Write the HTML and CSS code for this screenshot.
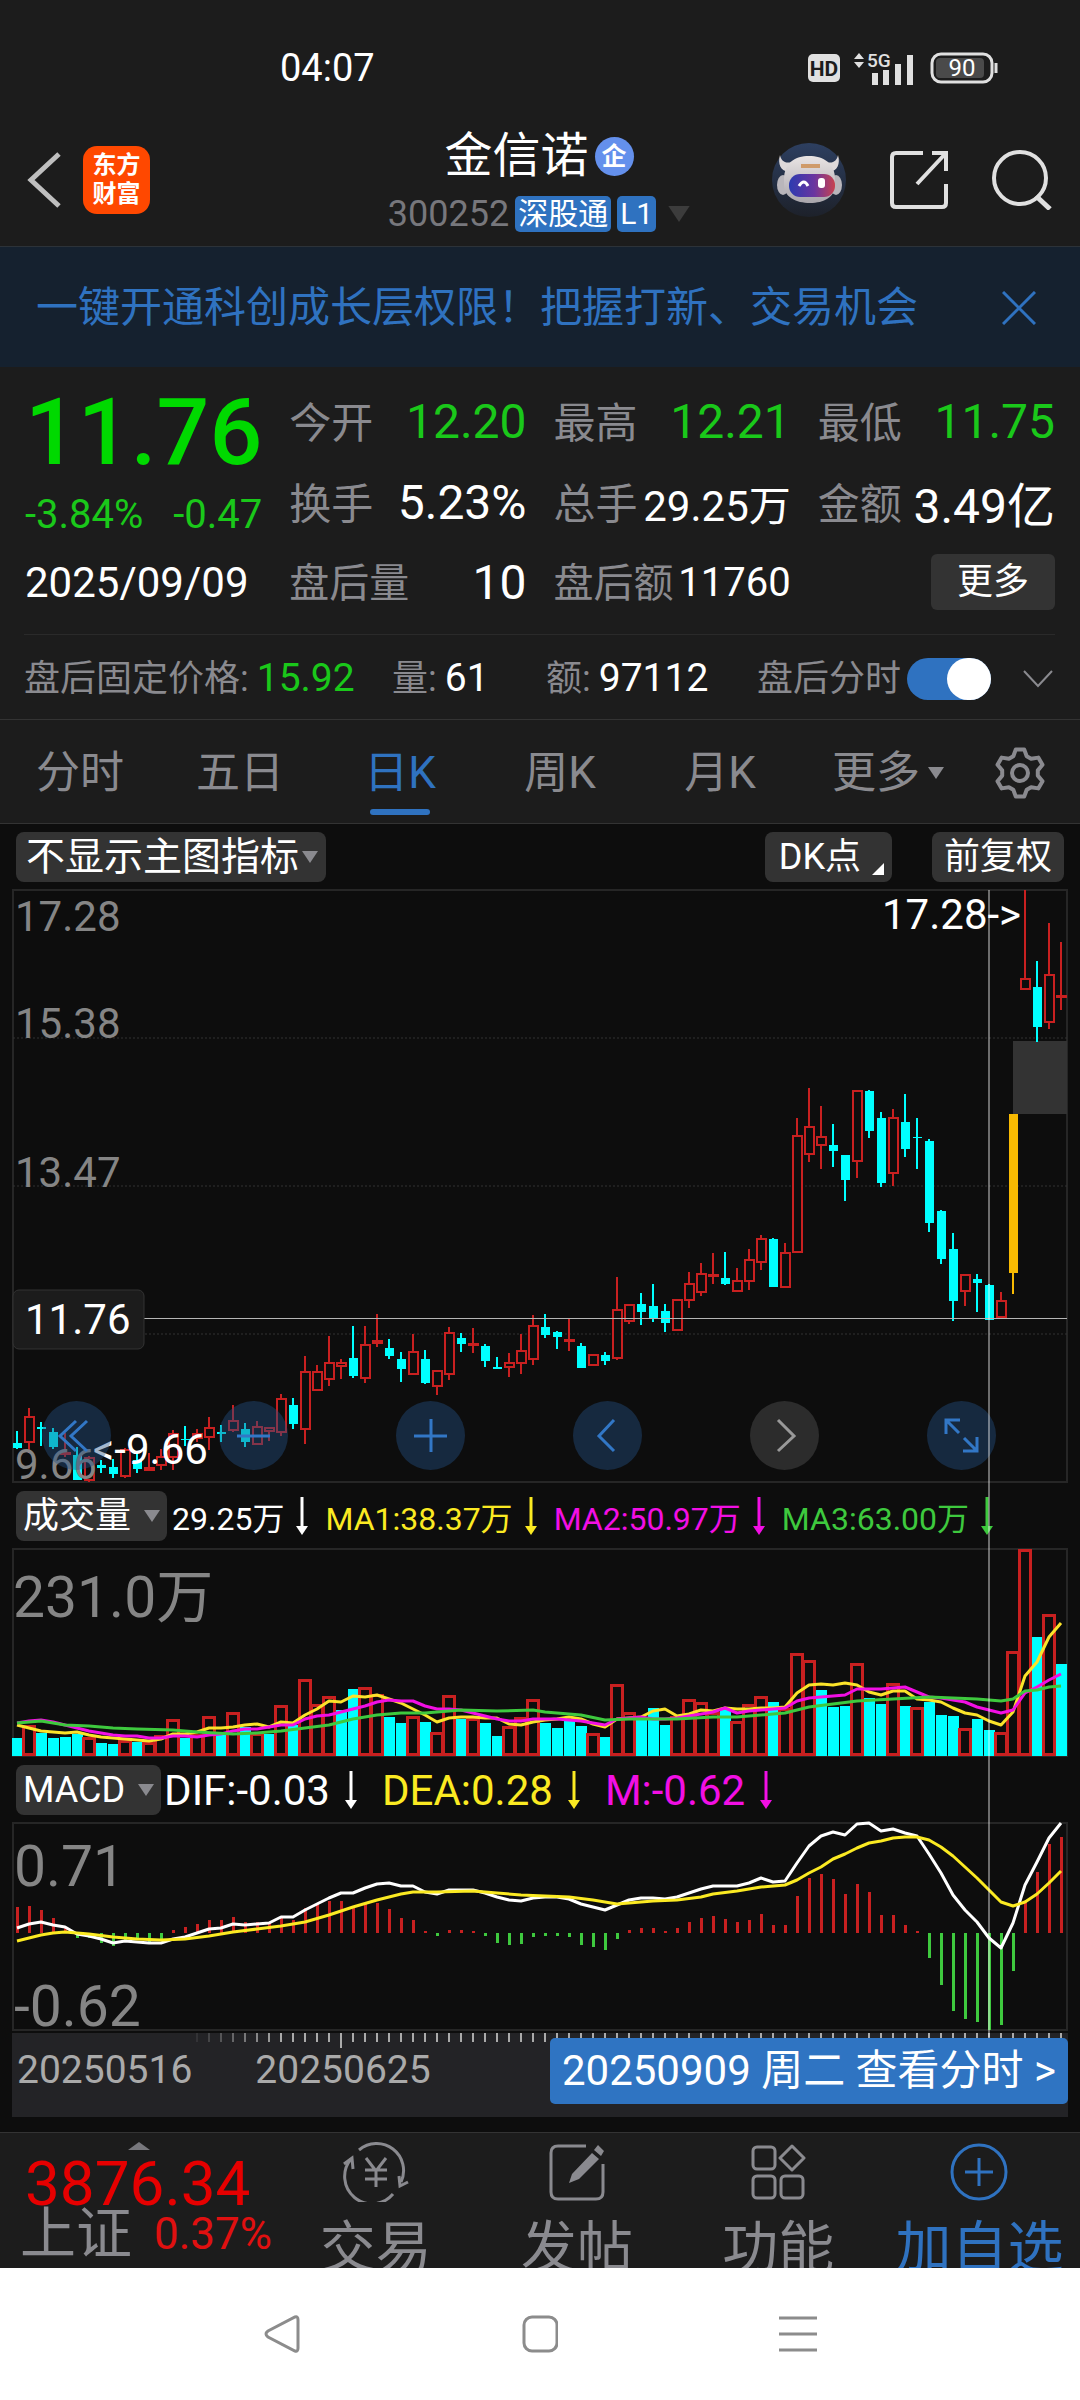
FILE: index.html
```html
<!DOCTYPE html>
<html lang="zh-CN">
<head>
<meta charset="utf-8">
<meta name="viewport" content="width=device-width, initial-scale=1">
<title>金信诺 300252</title>
<link rel="stylesheet" href="styles.css">
</head>
<body>
<svg class="defs" aria-hidden="true">
  <symbol id="i-down" viewBox="0 0 12 38"><path d="M6 0V31" stroke="currentColor" stroke-width="3"/><path d="M0 29H12L6 38Z" fill="currentColor"/></symbol>
  <symbol id="i-tri" viewBox="0 0 16 12"><path d="M0 0H16L8 12Z" fill="currentColor"/></symbol>
</svg>

<div class="status">
  <span class="clock">04:07</span>
  <span class="status-icons">
    <svg width="32" height="32" viewBox="0 0 32 32"><rect y="2" width="32" height="28" rx="5" fill="#e0e0e0"/><text x="16" y="24" text-anchor="middle" font-size="21" font-weight="700" fill="#1c1c1c">HD</text></svg>
    <svg width="62" height="40" viewBox="0 -4 62 40"><path d="M0 7L5 1L10 7ZM0 10H10L5 16Z" fill="#e0e0e0"/><text x="13" y="15" font-size="19" font-weight="500" fill="#e0e0e0">5G</text><path d="M21 21V33M32 18V33M44 12V33M56 3V33" stroke="#e0e0e0" stroke-width="6"/></svg>
    <svg width="68" height="32" viewBox="0 0 68 32"><rect x="2" y="2" width="60" height="28" rx="9" fill="none" stroke="#e0e0e0" stroke-width="3"/><rect x="6" y="6" width="48" height="20" rx="4" fill="#4a4a4a"/><path d="M66 11V21" stroke="#e0e0e0" stroke-width="3"/><text x="32" y="24" text-anchor="middle" font-size="24" fill="#fff">90</text></svg>
  </span>
</div>

<header class="top">
  <div class="top-left">
    <button class="icon-btn" aria-label="返回"><svg width="36" height="58" viewBox="0 0 36 58"><path d="M33 3L5 29L33 55" fill="none" stroke="#bfbfbf" stroke-width="5"/></svg></button>
    <a class="logo" href="#">东方<br>财富</a>
  </div>
  <div class="title">
    <h1>金信诺<span class="corp">企</span></h1>
    <div class="code"><span>300252</span><span class="tag">深股通</span><span class="tag">L1</span><svg class="code-tri" width="22" height="16"><use href="#i-tri"/></svg></div>
  </div>
  <div class="top-right">
    <button class="icon-btn" aria-label="助手">
      <svg width="74" height="74" viewBox="0 0 74 74">
        <defs>
          <linearGradient id="g-bg" x2="0" y2="1"><stop offset="0" stop-color="#2d3f60"/><stop offset="1" stop-color="#1d212a"/></linearGradient>
          <linearGradient id="g-head" x2="0" y2="1"><stop offset="0" stop-color="#e9e4e4"/><stop offset="1" stop-color="#a9a6ac"/></linearGradient>
          <linearGradient id="g-visor"><stop offset="0" stop-color="#2c3bb0"/><stop offset=".55" stop-color="#6a35a0"/><stop offset="1" stop-color="#c8434f"/></linearGradient>
        </defs>
        <circle cx="37" cy="37" r="37" fill="url(#g-bg)"/>
        <path d="M8 12C5 22 10 30 18 28L22 18C14 22 9 18 8 12ZM66 12C69 22 64 30 56 28L52 18C60 22 65 18 66 12Z" fill="#ded9da"/>
        <ellipse cx="11" cy="42" rx="6" ry="10" fill="#b9b6bb"/><ellipse cx="64" cy="42" rx="6" ry="10" fill="#b9b6bb"/>
        <path d="M12 36C12 20 23 13 37 13S63 20 63 36V42C63 54 52 60 38 60S12 54 12 42Z" fill="url(#g-head)"/>
        <path d="M29 23H48" stroke="#cf9b6a" stroke-width="4"/>
        <rect x="17" y="31" width="46" height="23" rx="11" fill="url(#g-visor)"/>
        <path d="M27 43Q32 35 36 43" fill="none" stroke="#fff" stroke-width="3"/><rect x="46" y="35" width="7" height="10" rx="3" fill="#fff"/>
      </svg>
    </button>
    <button class="icon-btn" aria-label="分享"><svg width="60" height="60" viewBox="0 0 60 60"><path d="M34 3H7Q3 3 3 7V53Q3 57 7 57H53Q57 57 57 53V34M43 3H57V21M57 3L28 34" fill="none" stroke="#e0e0e0" stroke-width="4"/></svg></button>
    <button class="icon-btn" aria-label="搜索"><svg width="60" height="60" viewBox="0 0 60 60"><circle cx="28" cy="28" r="26" fill="none" stroke="#e0e0e0" stroke-width="4"/><path d="M44 46L58 59" stroke="#e0e0e0" stroke-width="5"/></svg></button>
  </div>
</header>

<div class="notice">
  <a href="#">一键开通科创成长层权限！把握打新、交易机会</a>
  <button class="icon-btn" aria-label="关闭"><svg width="34" height="34" viewBox="0 0 34 34"><path d="M1 1L33 33M33 1L1 33" stroke="#2f72c0" stroke-width="3"/></svg></button>
</div>

<section class="quote">
  <div class="quote-grid">
    <div class="last">
      <strong>11.76</strong>
      <div class="change"><span>-3.84%</span><span>-0.47</span></div>
    </div>
    <div class="cell"><span>今开</span><b class="down">12.20</b></div>
    <div class="cell"><span>最高</span><b class="down">12.21</b></div>
    <div class="cell"><span>最低</span><b class="down">11.75</b></div>
    <div class="cell"><span>换手</span><b>5.23%</b></div>
    <div class="cell"><span>总手</span><b class="mid">29.25万</b></div>
    <div class="cell"><span>金额</span><b>3.49亿</b></div>
    <div class="cell date">2025/09/09</div>
    <div class="cell after"><span>盘后量</span><b>10</b></div>
    <div class="cell after"><span>盘后额</span><b class="small">11760</b></div>
    <div class="cell end"><button class="more">更多</button></div>
  </div>
  <div class="fixed-price">
    <div>盘后固定价格:<b class="down">15.92</b></div>
    <div>量:<b>61</b></div>
    <div>额:<b>97112</b></div>
    <label class="switch">盘后分时<input type="checkbox" role="switch" checked></label>
    <button class="icon-btn" aria-label="展开"><svg width="30" height="20" viewBox="0 0 30 20"><path d="M1 2L15 17L29 2" fill="none" stroke="#8a8a8f" stroke-width="2"/></svg></button>
  </div>
</section>

<nav class="tabs">
  <button>分时</button>
  <button>五日</button>
  <button class="active">日K</button>
  <button>周K</button>
  <button>月K</button>
  <button class="other">更多<svg width="16" height="12"><use href="#i-tri"/></svg></button>
  <button class="gear" aria-label="设置"><svg width="52" height="52" viewBox="-26 -26 52 52"><g fill="none" stroke="#8a8a8f" stroke-width="4" stroke-linejoin="round"><path d="M-6.7-16.7L-4.2-23.6H4.2L6.7-16.7L11.1-14.2L18.3-15.4L22.5-8.2L17.8-2.6V2.6L22.5 8.2L18.3 15.4L11.1 14.2L6.7 16.7L4.2 23.6H-4.2L-6.7 16.7L-11.1 14.2L-18.3 15.4L-22.5 8.2L-17.8 2.6V-2.6L-22.5-8.2L-18.3-15.4L-11.1-14.2Z"/><circle r="8"/></g></svg></button>
</nav>

<main class="board">
  <div class="bar">
    <button class="chip wide">不显示主图指标<svg width="16" height="12"><use href="#i-tri"/></svg></button>
    <button class="chip dk">DK点<i></i></button>
    <button class="chip">前复权</button>
  </div>

  <div class="charts">
    <div class="pane">
      <svg class="plot" id="price" viewBox="0 0 1080 592" role="img" aria-label="日K线"></svg>
      <div class="tools">
        <button aria-label="最早"><svg viewBox="0 0 69 69"><path d="M34 20L18 35L34 50M45 20L29 35L45 50"/></svg></button>
        <button aria-label="缩小"><svg viewBox="0 0 69 69"><path d="M18 35H51"/></svg></button>
        <button aria-label="放大"><svg viewBox="0 0 69 69"><path d="M18 35H51M35 18V51"/></svg></button>
        <button aria-label="向左"><svg viewBox="0 0 69 69"><path d="M41 19L26 35L41 50"/></svg></button>
        <button class="off" aria-label="向右"><svg viewBox="0 0 69 69"><path d="M28 19L44 35L28 50"/></svg></button>
        <button aria-label="全屏"><svg viewBox="0 0 69 69"><path d="M19 33V19H33M19 19L32 32M50 36V50H36M50 50L37 37"/></svg></button>
      </div>
    </div>

    <div class="bar legend vol">
      <button class="chip">成交量<svg width="16" height="12"><use href="#i-tri"/></svg></button>
      <span>29.25万<svg><use href="#i-down"/></svg></span>
      <span class="yellow">MA1:38.37万<svg><use href="#i-down"/></svg></span>
      <span class="magenta">MA2:50.97万<svg><use href="#i-down"/></svg></span>
      <span class="green">MA3:63.00万<svg><use href="#i-down"/></svg></span>
    </div>
    <svg class="plot" id="volume" viewBox="0 0 1080 208" role="img" aria-label="成交量"></svg>

    <div class="bar legend macd">
      <button class="chip">MACD<svg width="16" height="12"><use href="#i-tri"/></svg></button>
      <span>DIF:-0.03<svg><use href="#i-down"/></svg></span>
      <span class="yellow">DEA:0.28<svg><use href="#i-down"/></svg></span>
      <span class="magenta">M:-0.62<svg><use href="#i-down"/></svg></span>
    </div>
    <svg class="plot" id="macd" viewBox="0 0 1080 208" role="img" aria-label="MACD"></svg>

    <div class="timeline">
      <svg class="plot" id="ticks" viewBox="12 0 1056 16"></svg>
      <div class="dates"><span>20250516</span><span>20250625</span></div>
      <button class="day">20250909 周二 查看分时 &gt;</button>
    </div>
    <div class="cross"></div>
  </div>
</main>

<footer class="dock">
  <a class="index" href="#">
    <svg width="22" height="8" viewBox="0 0 22 8"><path d="M0 8L11 0L22 8Z" fill="#77777c"/></svg>
    <strong>3876.34</strong>
    <span>上证<em>0.37%</em></span>
  </a>
  <a href="#"><svg width="66" height="60" viewBox="0 0 66 60" fill="none" stroke="currentColor" stroke-width="3"><path d="M16 8A27 27 0 0 1 58 40M50 52A27 27 0 0 1 8 17"/><path d="M1 22L9 16L10 27M56 34L57 44L65 40"/><path d="M23 16L33 29L43 16M33 29V45M22 28H44M22 37H44"/></svg>交易</a>
  <a href="#"><svg width="58" height="60" viewBox="0 0 58 60" fill="none" stroke="currentColor" stroke-width="3"><path d="M38 4H10Q3 4 3 11V50Q3 57 10 57H48Q55 57 55 50V22"/><path d="M50 3L56 9L53 14L46 8ZM44 11L51 17L31 37L21 41L24 32Z" fill="currentColor" stroke="none"/></svg>发帖</a>
  <a href="#"><svg width="56" height="60" viewBox="0 0 56 60" fill="none" stroke="currentColor" stroke-width="3"><rect x="3" y="5" width="22" height="22" rx="4"/><rect x="3" y="34" width="22" height="22" rx="4"/><rect x="31" y="34" width="22" height="22" rx="4"/><path d="M42 4L54 16L42 28L30 16Z" stroke-linejoin="round"/></svg>功能</a>
  <a class="add" href="#"><svg width="60" height="60" viewBox="0 0 60 60" fill="none" stroke="currentColor" stroke-width="3"><circle cx="30" cy="30" r="27"/><path d="M16 30H44M30 16V44"/></svg>加自选</a>
</footer>

<nav class="sysnav">
  <button aria-label="返回"><svg width="36" height="38" viewBox="0 0 36 38"><path d="M31 2Q34 1 34 5V33Q34 37 31 36L4 22Q0 19 4 16Z"/></svg></button>
  <button aria-label="主页"><svg width="36" height="38" viewBox="0 0 36 38"><rect x="2" y="2" width="33" height="34" rx="8"/></svg></button>
  <button aria-label="任务"><svg width="38" height="38" viewBox="0 0 38 38"><path d="M0 3H38M0 19H38M0 35H38"/></svg></button>
</nav>
<script src="chart.js"></script>
</body>
</html>
```
FILE: styles.css
```css
* { box-sizing: border-box; }
body {
  margin: 0;
  min-height: 100vh;
  display: flex;
  flex-direction: column;
  background: #fff;
  color: #fff;
  font-family: Roboto, "Noto Sans CJK SC", sans-serif;
}
button {
  margin: 0;
  padding: 0;
  border: 0;
  background: none;
  color: inherit;
  font: inherit;
  white-space: nowrap;
}
a { color: inherit; text-decoration: none; }
svg { display: block; flex: none; }
b, em { font-weight: 400; font-style: normal; }
.defs { display: none; }
.icon-btn { display: flex; }

/* status bar */
.status {
  display: flex;
  align-items: center;
  justify-content: space-between;
  padding: 48px 82px 0 280px;
  background: #1c1c1c;
  font-size: 38px;
  line-height: 40px;
}
.status-icons { display: flex; align-items: center; gap: 14px; }

/* title bar */
.top {
  display: grid;
  grid-template-columns: 1fr auto 1fr;
  align-items: center;
  padding: 40px 28px 14px 26px;
  background: #1c1c1c;
  border-bottom: 1px solid #2c3238;
}
.top-left, .top-right { display: flex; align-items: center; }
.top-left { gap: 21px; }
.top-right { justify-content: flex-end; gap: 43px; }
.logo {
  width: 67px;
  padding: 5px 0 5px;
  border-radius: 14px;
  background: #ff4800;
  font-size: 24px;
  font-weight: 700;
  line-height: 29px;
  text-align: center;
}
.title { display: flex; flex-direction: column; align-items: center; gap: 12px; }
.title h1 {
  display: flex;
  align-items: center;
  gap: 6px;
  margin: 0;
  font-size: 48px;
  font-weight: 400;
  line-height: 56px;
}
.corp {
  width: 39px;
  border-radius: 50%;
  background: #6490ec;
  font-size: 25px;
  font-weight: 700;
  line-height: 39px;
  text-align: center;
}
.code {
  display: flex;
  align-items: center;
  gap: 6px;
  color: #77777c;
  font-size: 36px;
  line-height: 36px;
}
.tag {
  padding: 0 3px;
  border-radius: 5px;
  background: #2f72c0;
  color: #fff;
  font-size: 30px;
}
.code-tri { margin-left: 6px; color: #3c3c3c; }

/* notice */
.notice {
  display: flex;
  align-items: center;
  justify-content: space-between;
  padding: 33px 44px 31px 36px;
  background: #15212f;
  color: #2f72c0;
  font-size: 42px;
  line-height: 56px;
}

/* quote */
.quote { background: #1c1c1c; border-bottom: 1px solid #333; }
.quote-grid {
  display: grid;
  grid-template-columns: repeat(4, minmax(0, 1fr));
  grid-template-rows: 82px 80px 80px;
  column-gap: 27px;
  padding: 13px 25px 12px;
}
.last { grid-row: span 2; padding-top: 3px; color: #00d900; }
.last strong { display: block; font-size: 93px; font-weight: 500; line-height: 100px; }
.change {
  display: flex;
  justify-content: space-between;
  margin-top: 8px;
  font-size: 40px;
  line-height: 48px;
}
.down, .change { color: #1ac81a; }
.cell {
  display: flex;
  align-items: center;
  justify-content: space-between;
  white-space: nowrap;
}
.cell span { padding-bottom: 4px; color: #8a8a8f; font-size: 42px; }
.cell b { font-size: 48px; }
.cell .mid { font-size: 42px; }
.cell .small { font-size: 40px; }
.cell.after span { font-size: 40px; }
.date { font-size: 42px; }
.end { justify-content: flex-end; }
.more {
  width: 124px;
  border-radius: 6px;
  background: #333;
  font-size: 36px;
  line-height: 56px;
}
.fixed-price {
  display: grid;
  grid-template-columns: 368fr 154fr 211fr 266fr 32fr;
  align-items: center;
  margin: 0 25px 0 24px;
  padding: 19px 0 16px;
  border-top: 1px solid #2a2a2a;
  color: #8a8a8f;
  font-size: 36px;
  line-height: 48px;
  white-space: nowrap;
}
.fixed-price b { margin-left: 8px; color: #fff; font-size: 39px; }
.fixed-price .down { color: #1ac81a; }
.switch { display: flex; align-items: center; gap: 6px; }
.switch input {
  appearance: none;
  display: flex;
  justify-content: flex-end;
  width: 84px;
  height: 42px;
  margin: 0;
  border-radius: 21px;
  background: #2f72c0;
}
.switch input::before { content: ""; width: 44px; border-radius: 21px; background: #fff; }

/* period tabs */
.tabs {
  display: grid;
  grid-template-columns: repeat(6, 4fr) 3fr;
  background: #1c1c1c;
  border-bottom: 1px solid #333;
  color: #8a8a8f;
  font-size: 44px;
  line-height: 52px;
}
.tabs button {
  display: flex;
  align-items: center;
  justify-content: center;
  gap: 6px;
  padding: 27px 0 24px;
}
.tabs .active {
  flex-direction: column;
  padding-bottom: 8px;
  gap: 10px;
  color: #2f72c0;
}
.tabs .other { padding-left: 16px; gap: 8px; }
.tabs .active::after { content: ""; width: 60px; height: 6px; border-radius: 3px; background: #2f72c0; }

/* chart board */
.board { padding-bottom: 15px; background: #0d0d0d; }
.bar { display: flex; align-items: center; padding: 8px 16px; }
.chip {
  display: flex;
  align-items: center;
  padding: 0 12px;
  border-radius: 8px;
  background: #333;
  font-size: 36px;
  line-height: 50px;
}
.chip svg { color: #8a8a8f; }
.wide { gap: 3px; margin-right: auto; padding: 0 8px 0 10px; font-size: 39px; }
.dk { gap: 11px; margin-right: 40px; padding: 0 8px 0 14px; }
.dk i { align-self: flex-end; margin-bottom: 7px; border: 6px solid; border-color: transparent #fff #fff transparent; }
.charts, .pane { position: relative; }
.plot { width: 100%; height: auto; overflow: visible; }
.plot text { font-size: 42px; fill: #fff; }
.plot .axis { fill: #858585; }
.plot .big { font-size: 57px; fill: #858585; }
.tools {
  position: absolute;
  right: 7.8%;
  bottom: 12px;
  left: 3.9%;
  display: flex;
  justify-content: space-between;
}
.tools button { width: 69px; height: 69px; border-radius: 50%; background: rgba(36, 81, 134, .42); }
.tools svg { fill: none; stroke: #3277c6; stroke-width: 3; }
.tools .off { background: #2c2c2c; }
.tools .off svg { stroke: #999; }

.legend span { display: flex; align-items: center; white-space: nowrap; }
.legend span svg { width: 12px; height: 38px; }
.legend .chip { padding: 0 7px; gap: 13px; }
.vol { padding-top: 9px; font-size: 32px; }
.vol span { gap: 12px; margin-right: 17px; }
.vol .chip { margin-right: 5px; }
.macd { font-size: 42px; }
.macd span { gap: 15px; margin-right: 25px; }
.macd .chip { margin-right: 3px; }
.yellow { color: #fbea22; }
.magenta { color: #f20fe4; }
.green { color: #3ec93e; }

.timeline { position: relative; margin: 2px 12px 0; padding-bottom: 26px; background: #232326; }
.dates {
  display: flex;
  gap: 63px;
  padding-left: 5px;
  color: #aaa;
  font-size: 39px;
  line-height: 42px;
}
.day {
  position: absolute;
  z-index: 2;
  top: 5px;
  right: 0;
  padding: 0 12px;
  border-radius: 5px;
  background: #2f74c2;
  font-size: 42px;
  line-height: 66px;
}
.cross {
  position: absolute;
  top: 0;
  bottom: 80px;
  left: 91.5%;
  width: 2px;
  background: rgba(255, 255, 255, .4);
}

/* bottom dock, its captions run under the system bar */
.dock {
  display: grid;
  grid-template-columns: 275fr repeat(4, 201fr);
  height: 136px;
  overflow: hidden;
  background: #1c1c1c;
  border-top: 1px solid #333;
  color: #8a8a8f;
  font-size: 56px;
  line-height: 64px;
}
.dock a {
  display: flex;
  flex-direction: column;
  align-items: center;
  gap: 14px;
  padding-top: 9px;
  white-space: nowrap;
}
.dock .add { color: #2f72c0; }
.dock .index { align-items: flex-start; gap: 0; padding-left: 20px; }
.index svg { margin-left: 108px; }
.index strong { margin-left: 5px; color: #e60000; font-size: 62px; font-weight: 400; line-height: 68px; }
.index span { display: flex; align-items: center; gap: 22px; line-height: 32px; }
.index em { color: #e01010; font-size: 44px; }

.sysnav {
  flex: 1;
  display: grid;
  grid-template-columns: repeat(3, 258px);
  justify-content: center;
  min-height: 132px;
}
.sysnav button { display: flex; align-items: center; justify-content: center; }
.sysnav svg { fill: none; stroke: #8c8c8c; stroke-width: 3; }
```
FILE: chart.js
```js
// Each candle: colour, high, body top, body bottom, low (pixels below the top of the pane).
const candles = `c 541 553 558 559;r 518 526 553 563;c 532 537 539 556;c 538 542 557 559;r 543 562 564 567;c 557 565 590 590;r 566 567 591 592;c 570 575 578 583;c 569 577 584 588;r 558 559 587 588;c 563 570 579 583;r 563 577 581 581;r 559 566 576 580;r 540 543 568 580;c 536 549 550 556;r 539 543 549 552;r 527 537 548 560;c 535 542 544 552;r 515 530 541 542;c 533 539 552 557;r 531 536 555 555;r 537 537 542 551;r 504 508 543 546;c 508 515 534 539;r 466 481 540 554;r 475 481 501 501;r 446 472 490 496;r 469 472 477 489;c 436 468 486 488;r 436 454 489 493;r 424 450 454 457;c 449 458 466 469;c 462 469 479 492;r 444 461 485 485;c 460 469 493 494;r 480 480 497 505;r 437 442 485 490;c 443 448 454 462;r 438 453 455 463;c 454 456 471 477;c 467 477 479 479;r 463 472 478 487;r 444 460 474 484;r 425 435 470 475;c 424 437 445 448;c 441 442 447 459;r 429 449 451 461;c 453 456 478 478;r 464 464 476 476;c 462 465 471 475;r 387 419 469 470;r 414 414 432 434;c 403 414 422 435;c 394 416 428 432;c 414 421 433 442;r 409 409 441 441;r 382 393 411 418;r 373 383 403 406;r 363 384 386 394;c 362 388 394 395;r 378 390 402 402;r 359 369 392 400;r 345 348 373 380;c 348 349 397 397;r 353 362 398 398;r 228 245 363 363;r 198 236 265 272;r 216 246 256 279;c 234 255 261 277;c 265 265 290 311;r 200 200 272 288;c 200 201 241 248;c 222 228 293 297;r 219 227 284 296;c 204 232 259 267;c 228 247 248 279;c 249 251 333 342;c 320 321 369 374;c 343 359 411 431;r 384 384 402 416;c 384 389 393 422;c 394 395 430 430;r 402 410 428 428;y 224 224 383 404;r 0 88 100 100;c 71 97 137 152;r 33 84 133 139;r 52 105 108 120`.split(';').map(s => s.split(' '));

// Volume bars: colour and height.
const volumes = 'c18 r31 c23 c18 c19 c22 r19 c13 c12 r16 c14 r14 r21 r37 c18 r22 r40 c22 r44 c29 r23 c22 r51 c31 r77 r52 r60 c46 c67 r69 r62 c39 c33 r40 c34 r24 r61 c37 r38 c33 c20 r30 r39 r57 c33 c28 c35 c30 r23 c19 r72 r44 c37 c48 c31 r40 r57 r54 r44 c46 r35 r52 r60 c54 r48 r103 r96 c66 c49 c50 r93 c58 c52 r73 c50 r49 c54 c41 c40 r28 c37 c26 r24 r105 r207 c119 r142 c92'.split(' ');
const ma1 = '176 179 182 183 184 183 186 188 189 190 191 192 190 185 185 183 179 179 178 176 175 178 173 174 166 160 152 153 147 148 146 150 154 160 166 173 169 168 168 169 169 175 176 173 171 170 168 170 175 178 170 169 168 162 160 167 165 161 162 159 160 160 159 159 158 144 136 135 136 134 136 143 146 142 142 150 151 153 159 164 166 172 176 163 127 113 88 74';
const ma2 = '174 172 171 173 176 179 182 184 186 187 187 189 189 187 187 188 186 185 182 180 180 178 176 176 170 167 166 163 160 157 153 151 152 152 157 160 160 161 164 167 170 172 172 170 170 170 171 172 174 176 170 169 168 170 170 169 167 165 163 159 164 162 161 160 159 152 149 148 147 146 140 140 140 139 138 143 148 149 151 153 158 161 164 161 144 138 131 125';
const ma3 = '0:174 2:172 4:176 6:177 8:179 10:180 13:181 15:183 18:185 20:184 22:182 24:179 26:176 28:170 30:166 32:164 34:164 37:161 40:162 43:161 44:163 47:166 49:171 51:170 55:170 58:168 60:168 63:165 64:164 66:158 68:155 70:152 73:150 76:148 80:150 82:152 83:150 84:142 85:141 86:138 87:137';

// MACD: bar ends (zero line is at 110) and the two lines.
const macdBars = '84 83 87 95 104 115 115 120 123 119 117 119 117 107 104 101 97 97 94 99 99 99 94 97 85 80 78 78 84 80 80 86 95 97 108 113 107 107 108 113 120 122 121 114 113 113 114 122 124 127 116 107 105 105 108 105 99 95 93 96 99 97 91 102 102 73 55 51 56 71 61 69 92 92 102 108 135 162 188 196 199 207 202 148 79 49 21 14'.split(' ');
const dif = '105 101 99 102 104 111 113 116 120 118 119 120 120 116 114 110 106 105 101 102 101 100 94 94 87 81 75 70 70 65 61 60 63 63 69 71 67 67 67 70 74 77 78 75 74 74 76 81 84 87 82 77 75 75 76 74 70 66 63 63 63 60 55 59 58 40 23 13 9 12 1 0 8 6 10 13 31 50 72 87 99 115 125 100 62 39 15 0';
const dea = '0:118 1:115 2:112 3:110 4:109 6:111 8:114 10:116 12:117 14:116 16:113 18:109 20:106 22:103 24:99 26:92 28:84 30:77 32:71 33:69 35:69 38:68 40:70 42:72 44:73 46:74 48:77 50:81 53:78 55:77 57:74 58:71 60:68 62:64 64:62 65:57 66:50 67:44 68:36 69:31 70:25 71:20 72:18 73:15 74:14 75:14 76:17 77:24 78:33 79:44 80:55 81:67 82:79 83:83 84:79 85:71 86:60 87:48';

const colours = { r: '#c82020', c: '#00ffff', y: '#f8ba02' };
const x = i => 17 + 12 * i;
const rect = (x, y, w, h, fill) => `<rect x="${x}" y="${y}" width="${w}" height="${h}" fill="${fill}"/>`;
const hollow = (x, y, w, h, stroke) => `<rect x="${x}" y="${y}" width="${w}" height="${Math.max(h, 1)}" fill="#0d0d0d" stroke="${colours.r}" stroke-width="${stroke}"/>`;
const text = (x, y, s, cls = '') => `<text x="${x}" y="${y}" class="${cls}">${s}</text>`;
const line = (points, colour) => {
  const p = points.split(' ').map((s, i) => {
    const [a, b] = s.includes(':') ? s.split(':') : [i, s];
    return `${x(+a)},${b}`;
  });
  return `<polyline points="${p.join(' ')}" fill="none" stroke="${colour}" stroke-width="3" stroke-linejoin="round"/>`;
};
const frame = h => `<rect x="13" y="0" width="1054" height="${h}" fill="none" stroke="#262626" stroke-width="2"/>`;
const draw = (id, parts) => { document.getElementById(id).innerHTML = parts.join(''); };

draw('price', [
  frame(592),
  '<path d="M13 148H1067M13 296H1067M13 444H1067" stroke="#333" stroke-dasharray="2 2"/>',
  rect(1013, 151, 54, 73, '#333'),
  ...candles.map(([k, hi, top, bot, lo], i) => {
    const wick = rect(x(i) - 1, hi, 2, lo - hi, colours[k]);
    const body = k === 'r'
      ? hollow(x(i) - 4, +top + 1, 9, bot - top - 2, 2)
      : rect(x(i) - 4, top, 9, Math.max(bot - top, 1), colours[k]);
    return wick + body;
  }),
  text(15, 41, '17.28', 'axis'),
  text(15, 148, '15.38', 'axis'),
  text(15, 297, '13.47', 'axis'),
  text(15, 589, '9.66', 'axis'),
  text(882, 39, '17.28-&gt;'),
  text(93, 574, '&lt;-9.66'),
  rect(144, 428, 923, 1, '#b5b5b5'),
  '<rect x="13" y="400" width="131" height="59" rx="6" fill="#1c1c1c" stroke="#333"/>',
  text(25, 444, '11.76'),
]);

draw('volume', [
  frame(207),
  ...volumes.map((v, i) => {
    const h = +v.slice(1);
    return v[0] === 'r' ? hollow(x(i) - 5.5, 208.5 - h, 11, h - 3, 3) : rect(x(i) - 5, 207 - h, 11, h, colours.c);
  }),
  line(ma1, '#fbe32a'),
  line(ma2, '#f20fe4'),
  line(ma3, '#3ec93e'),
  text(13, 68, '231.0万', 'big'),
]);

draw('macd', [
  frame(207),
  text(14, 63, '0.71', 'big'),
  text(14, 203, '-0.62', 'big'),
  ...macdBars.map((v, i) => (v < 110
    ? rect(x(i) - 1, v, 3, 110 - v, '#c82020')
    : rect(x(i) - 1, 110, 3, v - 110, '#3ec93e'))),
  line(dif, '#fff'),
  line(dea, '#fbea22'),
]);

draw('ticks', Array.from({ length: 73 }, (_, n) => n + 15).map(i =>
  `<rect x="${x(i) - 1}" y="0" width="2" height="${i === 27 ? 15 : 9}" fill="#aaa" opacity="${Math.min(1, (i - 14) / 8)}"/>`));
```
